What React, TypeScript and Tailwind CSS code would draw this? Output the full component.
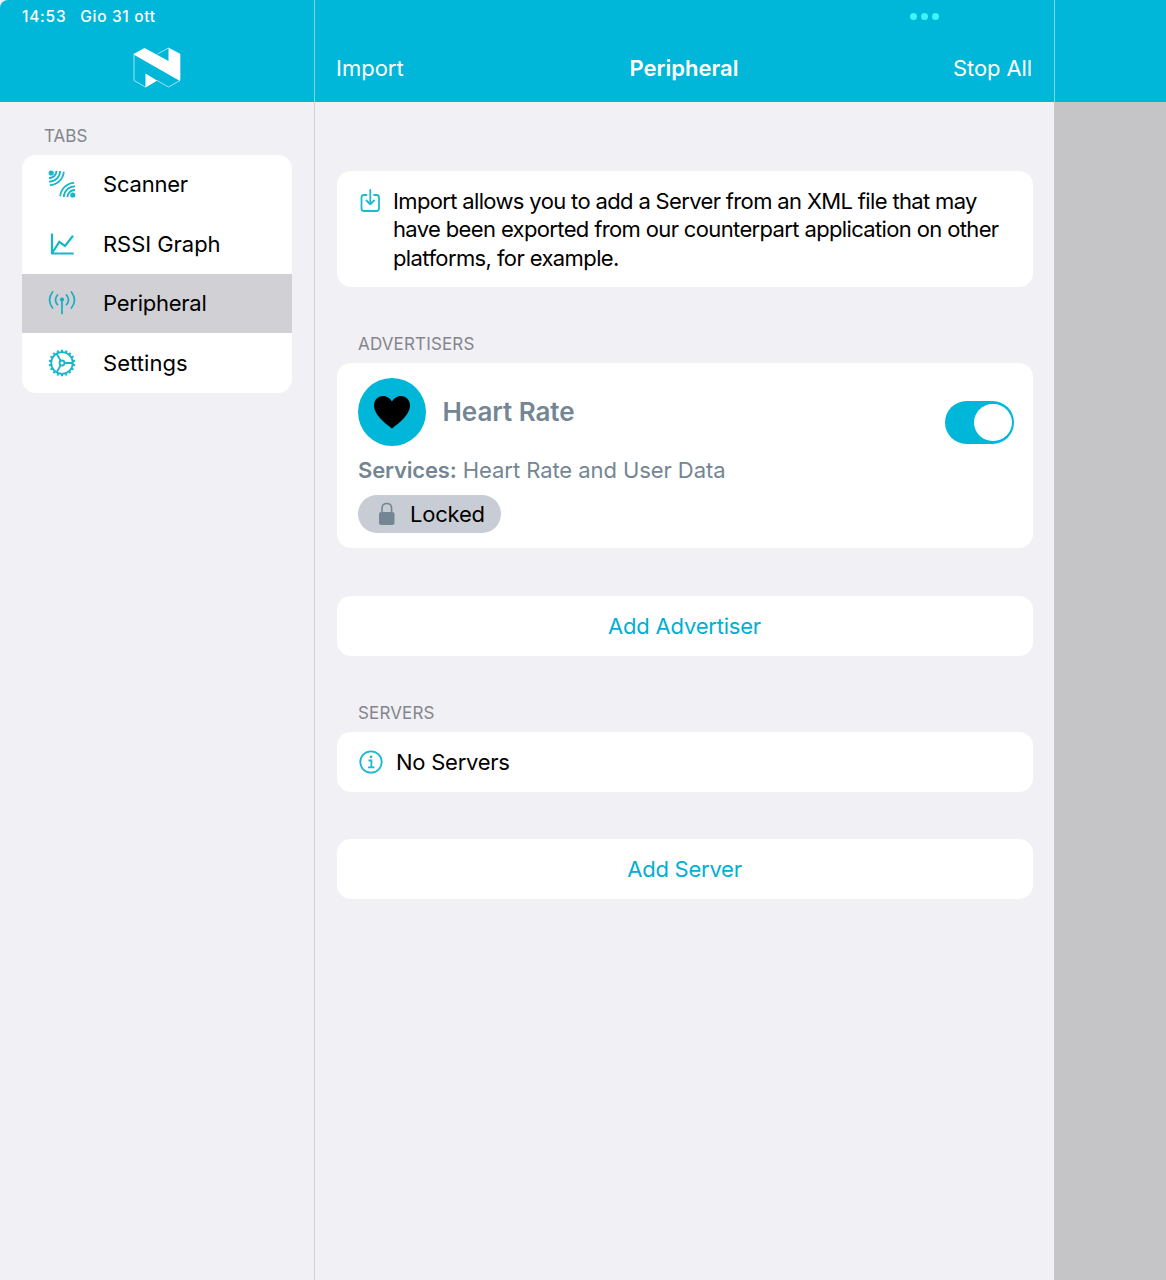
import React from "react";

function NordicLogo() {
  return (
    <svg width="50" height="44" viewBox="0 0 50 44" fill="none">
      <path d="M2 7.5V33.500L13.500 40L24.500 33.500M25.500 7L36.500 1L48 7V33.500L36.500 40L25 33.500" stroke="#9be4f1" strokeWidth="1" />
      <path d="M1.500 7L12.500 1L36.500 14V1L48 7V34L1.500 7.500Z" fill="#fff" />
      <path d="M13.500 26.500L25 33.500L13.500 40.500Z" fill="#fff" />
    </svg>
  );
}

function ScannerIcon() {
  return (
    <svg width="28" height="28" viewBox="0 0 28 28" fill="none" stroke="#18b6cb" strokeWidth="1.800">
      <circle cx="3.200" cy="3" r="2.600" fill="#18b6cb" stroke="none" />
      <path d="M8.500 .8A7.200 7.200 0 0 1 1 8M12.200 1A11 11 0 0 1 1 11.600M15.800 1.800A14.500 14.500 0 0 1 1.800 15.200" />
      <circle cx="24.800" cy="25" r="2.600" fill="#18b6cb" stroke="none" />
      <path d="M19.500 27.200A7.200 7.200 0 0 1 27 20M15.800 27A11 11 0 0 1 27 16.400M12.200 26.200A14.500 14.500 0 0 1 26.200 12.800" />
    </svg>
  );
}

function GraphIcon() {
  return (
    <svg width="28" height="28" viewBox="0 0 28 28" fill="none" stroke="#18b6cb" strokeWidth="2.200">
      <path d="M4 3.500V23.500H25.700M4.500 22.500L11.300 11.800L17 16L25 5.800" />
    </svg>
  );
}

function PeripheralIcon() {
  return (
    <svg width="28" height="28" viewBox="0 0 28 28" fill="none" stroke="#18adc5" strokeWidth="1.700" strokeLinecap="round">
      <circle cx="14" cy="10.500" r="2.100" fill="#18adc5" stroke="none" />
      <path d="M14 11V24.500M9.500 6Q5.500 11 9.500 15.700M18.500 6Q22.500 11 18.500 15.700M4.600 3Q-1.600 11 4.600 19M23.400 3Q29.600 11 23.400 19" />
    </svg>
  );
}

const TEETH = Array.from({ length: 18 }, (_, i) => i * 20);

function SettingsIcon() {
  return (
    <svg width="28" height="28" viewBox="0 0 28 28" fill="none" stroke="#18b6cb" strokeWidth="1.800">
      <circle cx="14" cy="14" r="10.800" />
      <circle cx="14" cy="14" r="2.500" />
      <path d="M16.500 14H25M12.700 11.800L8.500 4.500M12.700 16.200L8.500 23.500" />
      {TEETH.map((a) => (
        <path key={a} d="M14 .7V3" strokeWidth="2" transform={`rotate(${a} 14 14)`} />
      ))}
    </svg>
  );
}

function ImportIcon() {
  return (
    <svg width="22" height="26" viewBox="0 0 22 26" fill="none" stroke="#1cb9cf" strokeWidth="1.800" strokeLinecap="round" strokeLinejoin="round">
      <path d="M6.500 7H4Q1.500 7 1.500 9.500V20.500Q1.500 23 4 23H16.500Q19 23 19 20.500V9.500Q19 7 16.500 7H14M10.300 2V16M6.500 12.500L10.300 16.300L14.100 12.500" />
    </svg>
  );
}

function InfoIcon() {
  return (
    <svg width="24" height="24" viewBox="0 0 24 24" fill="none" stroke="#1cb9cf" strokeWidth="1.800">
      <circle cx="12" cy="12" r="10.700" />
      <circle cx="12" cy="6.800" r="1.400" fill="#1cb9cf" stroke="none" />
      <path d="M9.500 10.500H12.400V17.200M9 17.300H15.500" />
    </svg>
  );
}

function LockIcon() {
  return (
    <svg width="18" height="24" viewBox="0 0 18 24" fill="none">
      <path d="M4 11V6.500Q4 1.500 8.800 1.500Q13.600 1.500 13.600 6.500V11" stroke="#748693" strokeWidth="1.600" />
      <rect x="1" y="10" width="15.500" height="13" rx="2.200" fill="#748693" />
    </svg>
  );
}

const TABS = [
  { label: "Scanner", Icon: ScannerIcon, active: false, tracking: "tracking-[-0.2px]" },
  { label: "RSSI Graph", Icon: GraphIcon, active: false, tracking: "tracking-[-0.05px]" },
  { label: "Peripheral", Icon: PeripheralIcon, active: true, tracking: "tracking-[-0.25px]" },
  { label: "Settings", Icon: SettingsIcon, active: false, tracking: "tracking-[0.05px]" },
];

export default function App() {
  return (
    <div className="flex h-[1280px] w-[1166px] flex-col overflow-hidden bg-[#f0f0f5] font-['Inter',sans-serif] text-[22px] leading-7 text-black">
      <header className="flex h-[102px] shrink-0 rounded-tl-[8px] bg-[#00b7d9] text-white">
        <div className="flex w-[315px] flex-col border-r border-[#7fd3e6]">
          <div className="flex h-[33px] items-center gap-[14px] pl-[22px] text-[15.500px] font-medium">
            <span className="tracking-[0.75px]">14:53</span>
            <span className="tracking-[0.65px]">Gio 31 ott</span>
          </div>
          <div className="flex h-[69px] justify-center pt-[14px]">
            <NordicLogo />
          </div>
        </div>
        <div className="flex w-[740px] flex-col border-r border-[#7fd3e6]">
          <div className="flex h-[33px] items-center justify-end gap-1 pr-[115px]">
            <i className="size-[7px] rounded-full bg-[#3df4ff]" />
            <i className="size-[7px] rounded-full bg-[#3df4ff]" />
            <i className="size-[7px] rounded-full bg-[#3df4ff]" />
          </div>
          <div className="grid h-[69px] grid-cols-3 items-center pl-[21px] pr-[22px]">
            <span>Import</span>
            <span className="text-center font-semibold">Peripheral</span>
            <span className="text-right tracking-[-0.1px]">Stop All</span>
          </div>
        </div>
      </header>

      <div className="flex grow">
        <aside className="w-[315px] border-r border-[#d2d2d7] px-[22px] pt-5">
          <h2 className="pl-[22px] text-[17px] text-[#85858b]">TABS</h2>
          <nav className="mt-[4.500px] flex w-[270.400px] flex-col overflow-hidden rounded-[14px] bg-white">
            {TABS.map(({ label, Icon, active, tracking }) => (
              <a key={label} className={`flex h-[59.500px] items-center gap-[27px] pl-[26px] ${active ? "bg-[#d1d0d5]" : ""}`}>
                <Icon />
                <span className={tracking}>{label}</span>
              </a>
            ))}
          </nav>
        </aside>

        <main className="w-[739px] px-[21.500px] pt-[68.500px]">
          <section className="flex h-[116px] gap-[11.500px] rounded-[14px] bg-white pl-[23px] pt-[16.500px]">
            <span className="pt-px"><ImportIcon /></span>
            <p className="whitespace-nowrap leading-[28.400px]">
              <span className="block tracking-[-0.65px]">Import allows you to add a Server from an XML file that may</span>
              <span className="block tracking-[-0.64px]">have been exported from our counterpart application on other</span>
              <span className="block tracking-[-0.6px]">platforms, for example.</span>
            </p>
          </section>

          <h2 className="mt-[43.500px] pl-[21.500px] text-[17px] tracking-[0.15px] text-[#85858b]">ADVERTISERS</h2>
          <section className="mt-[5px] flex h-[185px] items-start justify-between rounded-[14px] bg-white pl-[21.500px] pr-[19px] pt-[15px]">
            <div>
              <div className="flex items-center gap-[17px]">
                <span className="flex size-[67.500px] items-center justify-center rounded-full bg-[#00b7d9]">
                  <svg width="38" height="34" viewBox="0 0 38 34">
                    <path d="M19 33.500C16 31 1 21 1 10.500C1 5 5 1 10 1C14 1 17.500 3.500 19 6.500C20.500 3.500 24 1 28 1C33 1 37 5 37 10.500C37 21 22 31 19 33.500Z" />
                  </svg>
                </span>
                <span className="text-[26px] font-semibold tracking-[-0.05px] text-[#748693]">Heart Rate</span>
              </div>
              <p className="mt-[10px] text-[#748693]">
                <b className="font-semibold tracking-[-0.15px]">Services:</b>{" "}
                <span className="tracking-[-0.07px]">Heart Rate and User Data</span>
              </p>
              <div className="mt-[11px] flex h-[38.500px] w-[143px] items-center gap-[14.500px] rounded-full bg-[#c8ccd4] pl-[19.500px]">
                <LockIcon />
                <span className="tracking-[-0.2px]">Locked</span>
              </div>
            </div>
            <button className="mt-[23px] flex h-[43px] w-[69px] items-center justify-end rounded-full bg-[#00b7d9] pr-[2px]">
              <span className="size-[37.500px] rounded-full bg-white" />
            </button>
          </section>

          <button className="mt-12 flex h-[60px] w-full items-center justify-center rounded-[14px] bg-white text-[#00b0d3]">
            <span className="tracking-[-0.2px]">Add Advertiser</span>
          </button>

          <h2 className="mt-[43px] pl-[21.500px] text-[17px] tracking-[0.15px] text-[#85858b]">SERVERS</h2>
          <section className="mt-[5px] flex h-[60px] items-center gap-[13px] rounded-[14px] bg-white pl-[22.500px]">
            <InfoIcon />
            <span className="tracking-[-0.25px]">No Servers</span>
          </section>

          <button className="mt-[47px] flex h-[60px] w-full items-center justify-center rounded-[14px] bg-white text-[#00b0d3]">
            <span className="tracking-[-0.25px]">Add Server</span>
          </button>
        </main>

        <div className="grow border-l border-[#c5c5c8] bg-[#c5c5c7]" />
      </div>
    </div>
  );
}
